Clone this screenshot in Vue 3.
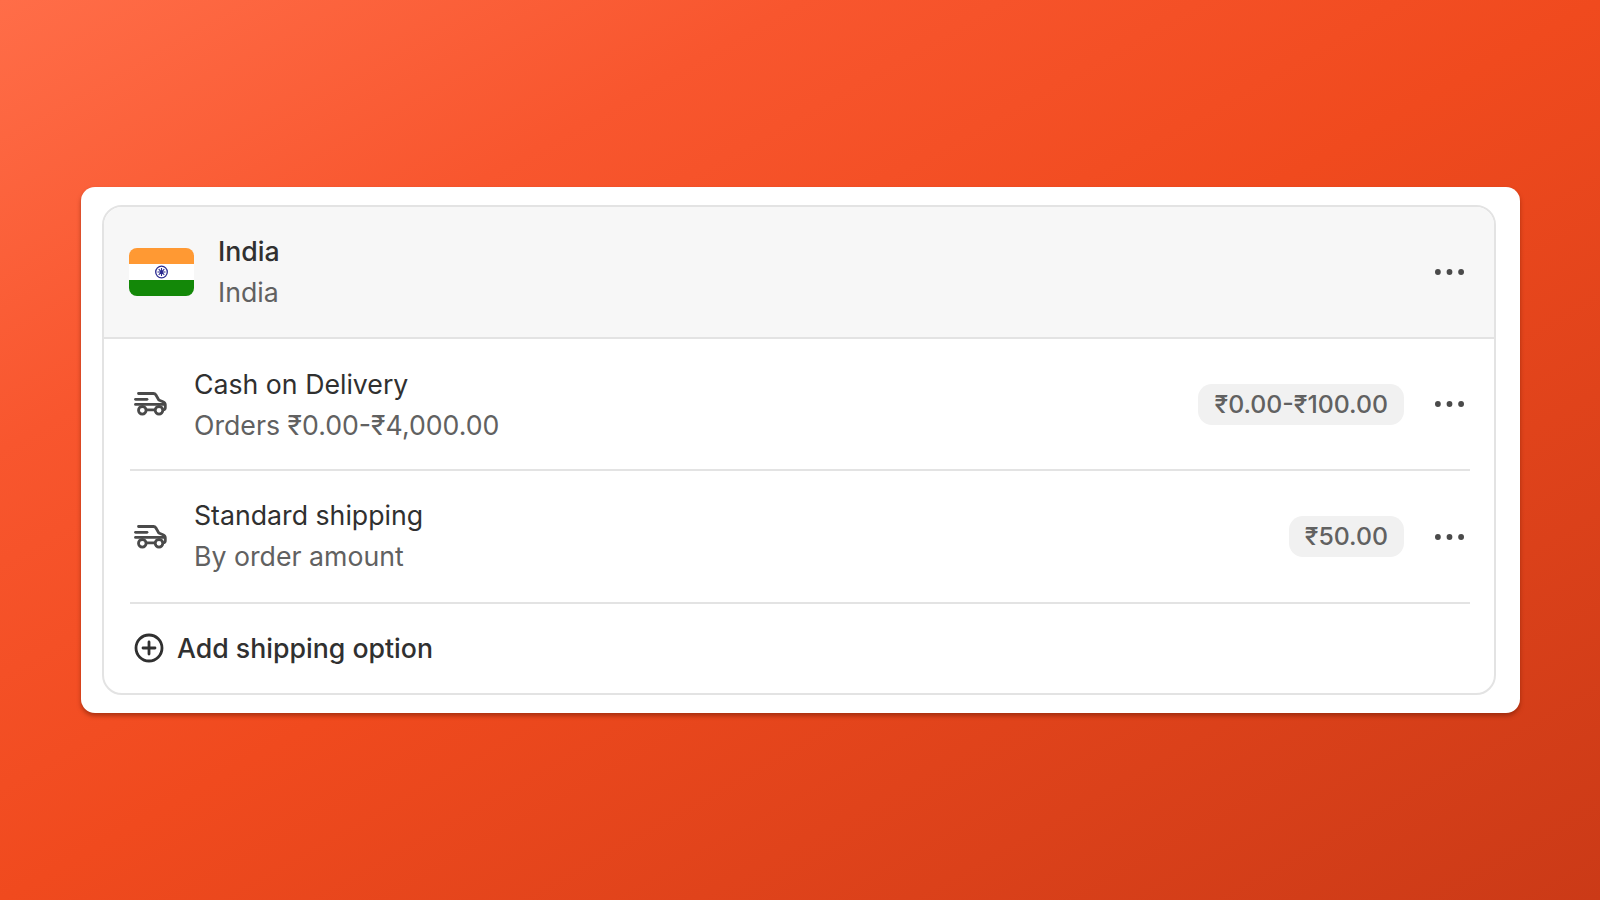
<script setup>
const rates = [
  { name: 'Cash on Delivery', detail: 'Orders ₹0.00-₹4,000.00', price: '₹0.00-₹100.00' },
  { name: 'Standard shipping', detail: 'By order amount', price: '₹50.00' }
]
</script>

<template>
  <div class="page">
    <div class="card">
      <div class="box">
        <div class="zone">
          <svg class="flag" viewBox="0 0 65 48" width="65" height="48">
            <defs>
              <clipPath id="flag-clip"><rect width="65" height="48" rx="8" /></clipPath>
            </defs>
            <g clip-path="url(#flag-clip)">
              <rect width="65" height="16" fill="#ff9933" />
              <rect y="16" width="65" height="16" fill="#ffffff" />
              <rect y="32" width="65" height="16" fill="#138808" />
            </g>
            <circle cx="32.500" cy="24" r="5.800" fill="#fff" stroke="#2a2a8f" stroke-width="1.300" />
            <path d="M32.500 20v8M28.500 24h8M29.700 21.200l5.600 5.600M35.300 21.200l-5.600 5.600" stroke="#2a2a8f" stroke-width="1.100" />
            <circle cx="32.500" cy="24" r="1.500" fill="#2a2a8f" />
          </svg>
          <div class="texts">
            <div class="zone-title">India</div>
            <div class="sub">India</div>
          </div>
          <svg class="dots" viewBox="0 0 29 6" width="29" height="6">
            <circle cx="2.900" cy="3" r="2.900" />
            <circle cx="14.500" cy="3" r="2.900" />
            <circle cx="26.100" cy="3" r="2.900" />
          </svg>
        </div>

        <div class="list">
          <div v-for="rate in rates" :key="rate.name" class="rate">
            <svg class="truck" viewBox="0 0 33 24" width="33" height="24" fill="none" stroke="#4a4a4a" stroke-width="2.800" stroke-linecap="round" stroke-linejoin="round">
              <path d="M4.500 1.500h15c1 0 1.800.5 2.300 1.300l3 5.200 4.200 1.700c1.500.6 2.300 1.700 2.300 3.100v3c0 1.200-.7 1.900-1.800 2.100" />
              <path d="M1.500 7.300h11.500" />
              <path d="M1.500 12.400h29" />
              <path d="M20.500 17.800h-8" />
              <circle cx="8.300" cy="18.300" r="3.800" />
              <circle cx="25" cy="18.300" r="3.800" />
            </svg>
            <div class="texts">
              <div class="rate-title">{{ rate.name }}</div>
              <div class="sub">{{ rate.detail }}</div>
            </div>
            <span class="price">{{ rate.price }}</span>
            <svg class="dots" viewBox="0 0 29 6" width="29" height="6">
              <circle cx="2.900" cy="3" r="2.900" />
              <circle cx="14.500" cy="3" r="2.900" />
              <circle cx="26.100" cy="3" r="2.900" />
            </svg>
          </div>
          <div class="add">
            <svg viewBox="0 0 30 30" width="30" height="30" fill="none" stroke="#303030" stroke-width="2.800" stroke-linecap="round">
              <circle cx="15" cy="15" r="13" />
              <path d="M15 9v12M9 15h12" />
            </svg>
            <span>Add shipping option</span>
          </div>
        </div>
      </div>
    </div>
  </div>
</template>

<style scoped>
.page {
  width: 1600px;
  height: 900px;
  box-sizing: border-box;
  padding: 187px 80px 0 81px;
  background: linear-gradient(to bottom right, #ff6d48 0%, #f8562e 25%, #f04a1e 50%, #cb3a17 100%);
  font-family: Inter, "Liberation Sans", sans-serif;
  color: #303030;
}
.card {
  height: 526px;
  box-sizing: border-box;
  padding: 18px 24px 18px 21px;
  background: #fff;
  border-radius: 14px;
  box-shadow: 0 3px 4px rgba(120, 30, 5, 0.55);
}
.box {
  height: 100%;
  box-sizing: border-box;
  border: 2px solid #e3e3e3;
  border-radius: 20px;
  overflow: hidden;
  display: flex;
  flex-direction: column;
}
.zone {
  height: 132px;
  flex: none;
  box-sizing: border-box;
  display: flex;
  align-items: center;
  gap: 24px;
  padding: 0 30px 0 25px;
  background: #f7f7f7;
  border-bottom: 2px solid #e3e3e3;
}
.flag {
  flex: none;
}
.texts {
  flex: 1;
  display: flex;
  flex-direction: column;
  gap: 9px;
}
.zone .texts {
  padding-bottom: 2px;
}
.zone-title {
  font-size: 26.700px;
  line-height: 32px;
  font-weight: 500;
}
.rate-title {
  font-size: 26.700px;
  line-height: 32px;
}
.sub {
  font-size: 26.700px;
  line-height: 32px;
  color: #616161;
}
.dots {
  flex: none;
  fill: #4a4a4a;
}
.list {
  flex: 1;
  display: flex;
  flex-direction: column;
  padding: 0 24px 0 26px;
}
.rate {
  height: 132px;
  flex: none;
  box-sizing: border-box;
  display: flex;
  align-items: center;
  padding-right: 6px;
  border-bottom: 2px solid #e3e3e3;
}
.rate + .rate {
  height: 133px;
}
.rate + .rate .texts {
  padding-bottom: 2px;
}
.truck {
  flex: none;
  margin: 0 27px 0 4px;
}
.price {
  flex: none;
  margin-right: 31px;
  padding: 0 16px;
  height: 41px;
  line-height: 41px;
  border-radius: 14px;
  background: #f1f1f1;
  color: #616161;
  font-size: 24.800px;
  font-weight: 500;
}
.add {
  flex: 1;
  display: flex;
  align-items: center;
  gap: 13px;
  padding: 0 0 1px 4px;
  font-size: 26.700px;
  font-weight: 500;
}
</style>

<style>
body {
  margin: 0;
}
</style>
